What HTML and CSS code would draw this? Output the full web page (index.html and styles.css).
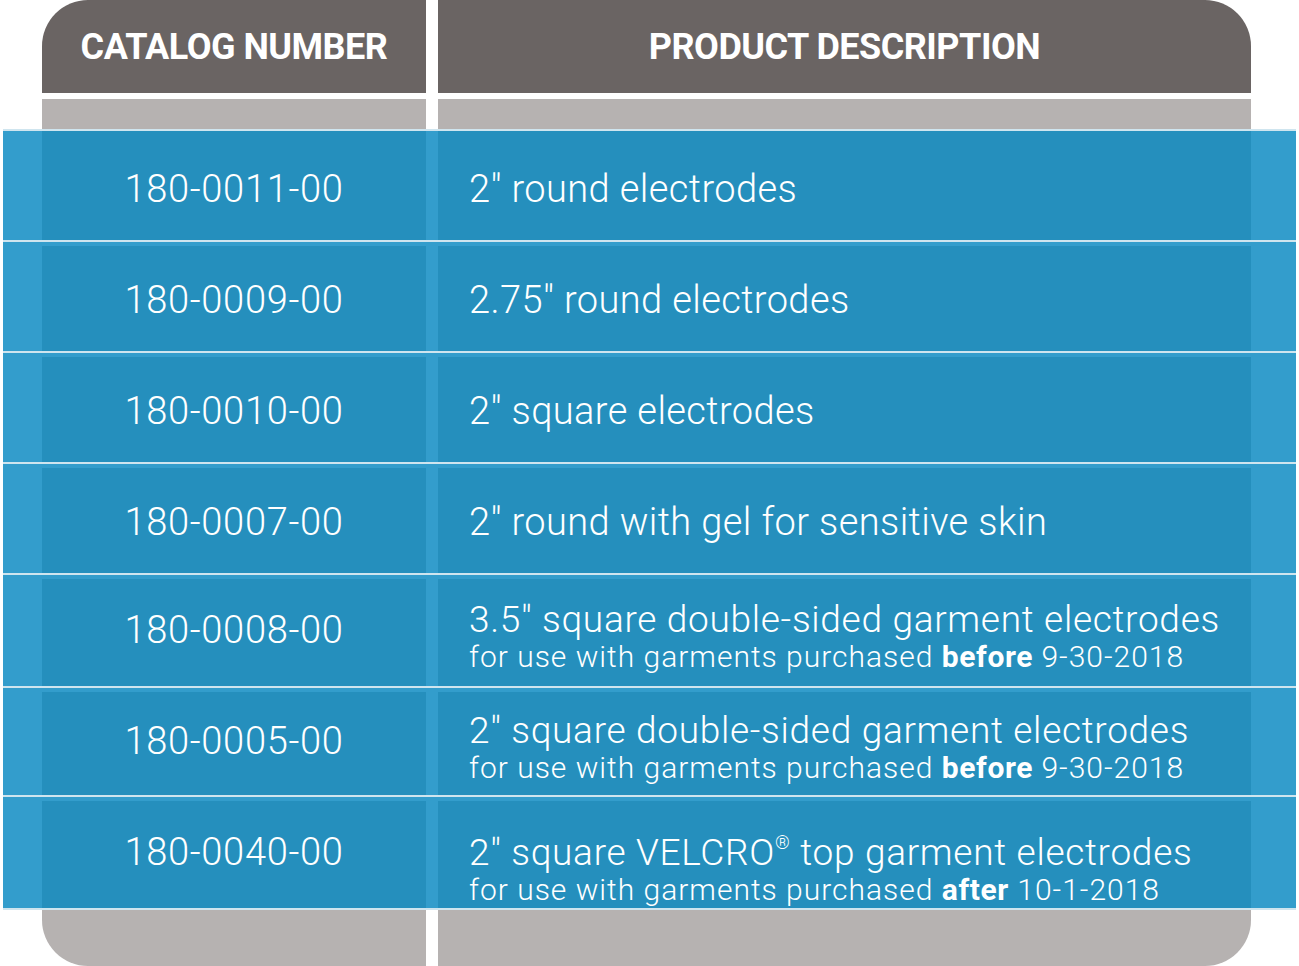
FILE: index.html
```html
<!DOCTYPE html>
<html lang="en">
<head>
<meta charset="utf-8">
<title>Electrodes catalog</title>
<link rel="stylesheet" href="styles.css">
</head>
<body>
<div class="sheet">
  <div class="cols head">
    <div class="hcell hcell-left">CATALOG NUMBER</div>
    <div class="gap"></div>
    <div class="hcell hcell-right">PRODUCT DESCRIPTION</div>
  </div>
  <div class="cols strip">
    <div class="gcell"></div>
    <div class="gap"></div>
    <div class="gcell"></div>
  </div>
  <div class="band">
    <div class="row row-first">
      <div class="edge"></div>
      <div class="cell num">180-0011-00</div>
      <div class="mid"></div>
      <div class="cell desc">2″ round electrodes</div>
      <div class="edge"></div>
    </div>
    <div class="row">
      <div class="edge"></div>
      <div class="cell num">180-0009-00</div>
      <div class="mid"></div>
      <div class="cell desc">2.75″ round electrodes</div>
      <div class="edge"></div>
    </div>
    <div class="row">
      <div class="edge"></div>
      <div class="cell num">180-0010-00</div>
      <div class="mid"></div>
      <div class="cell desc">2″ square electrodes</div>
      <div class="edge"></div>
    </div>
    <div class="row">
      <div class="edge"></div>
      <div class="cell num">180-0007-00</div>
      <div class="mid"></div>
      <div class="cell desc">2″ round with gel for sensitive skin</div>
      <div class="edge"></div>
    </div>
    <div class="row row-tall">
      <div class="edge"></div>
      <div class="cell num">180-0008-00</div>
      <div class="mid"></div>
      <div class="cell desc desc-two">
        <span class="main">3.5″ square double-sided garment electrodes</span>
        <span class="sub">for use with garments purchased <b>before</b> 9-30-2018</span>
      </div>
      <div class="edge"></div>
    </div>
    <div class="row row-short">
      <div class="edge"></div>
      <div class="cell num">180-0005-00</div>
      <div class="mid"></div>
      <div class="cell desc desc-two">
        <span class="main">2″ square double-sided garment electrodes</span>
        <span class="sub">for use with garments purchased <b>before</b> 9-30-2018</span>
      </div>
      <div class="edge"></div>
    </div>
    <div class="row row-tall">
      <div class="edge"></div>
      <div class="cell num">180-0040-00</div>
      <div class="mid"></div>
      <div class="cell desc desc-two desc-low">
        <span class="main">2″ square VELCRO<sup>®</sup> top garment electrodes</span>
        <span class="sub">for use with garments purchased <b>after</b> 10-1-2018</span>
      </div>
      <div class="edge"></div>
    </div>
  </div>
  <div class="cols foot">
    <div class="gcell fcell-left"></div>
    <div class="gap"></div>
    <div class="gcell fcell-right"></div>
  </div>
</div>
</body>
</html>
```
FILE: styles.css
```css
html, body {
  margin: 0;
  padding: 0;
  background: #ffffff;
}
body {
  font-family: Roboto, "Liberation Sans", sans-serif;
  color: #ffffff;
  width: 1299px;
  height: 966px;
  overflow: hidden;
}
.sheet {
  display: flex;
  flex-direction: column;
}
.cols {
  display: grid;
  grid-template-columns: 384px 12px 813px;
  margin-left: 42px;
  width: 1209px;
}
.head {
  height: 93px;
}
.hcell {
  background: #6a6463;
  display: flex;
  align-items: center;
  justify-content: center;
  font-weight: 700;
  font-size: 36px;
  letter-spacing: -0.5px;
  padding-top: 1px;
}
.hcell-left {
  border-top-left-radius: 46px;
}
.hcell-right {
  border-top-right-radius: 46px;
}
.strip {
  height: 30px;
  margin-top: 6px;
}
.gcell {
  background: #b6b2b1;
}
.band {
  margin-left: 3px;
  width: 1293px;
  background: #339dcc;
  border-bottom: 2px solid #cfe5ef;
}
.row {
  display: grid;
  grid-template-columns: 39px 384px 12px 813px 45px;
  grid-template-rows: 100%;
  height: 109px;
  border-top: 2px solid #cfe5ef;
  overflow: hidden;
}
.row-tall {
  height: 111px;
}
.row-short {
  height: 107px;
}
.cell {
  background: #258fbd;
  margin-top: 4px;
  display: flex;
  align-items: center;
  font-weight: 300;
  font-size: 38px;
  min-height: 0;
}
.row-first .cell {
  margin-top: 0;
  padding-top: 7px;
}
.num {
  justify-content: center;
  padding-top: 2px;
  letter-spacing: 0.7px;
}
.row-tall .num,
.row-short .num {
  padding-top: 0;
  padding-bottom: 5px;
}
.desc {
  padding-left: 31px;
  padding-top: 2px;
  letter-spacing: 0.4px;
}
.desc-two {
  flex-direction: column;
  align-items: flex-start;
  justify-content: center;
  line-height: 1;
  padding-top: 8px;
}
.desc-low {
  justify-content: flex-start;
  padding-top: 32px;
}
.main {
  display: block;
  font-size: 37px;
  line-height: 40px;
  letter-spacing: 0.7px;
}
.sub {
  display: block;
  font-size: 30px;
  line-height: 34px;
  letter-spacing: 1px;
}
.sub b {
  font-weight: 700;
  letter-spacing: 0.6px;
}
sup {
  font-size: 0.5em;
  line-height: 0;
  vertical-align: 0.85em;
}
.foot {
  height: 56px;
}
.fcell-left {
  border-bottom-left-radius: 46px;
}
.fcell-right {
  border-bottom-right-radius: 46px;
}
```
